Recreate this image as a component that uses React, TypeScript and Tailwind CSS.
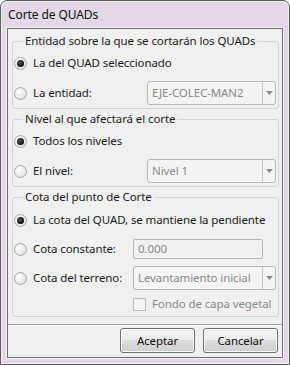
import React from "react";

function Radio({ checked }: { checked?: boolean }) {
  return (
    <span className="w-[13px] h-[13px] shrink-0 rounded-full border border-[#a9a9a9] bg-[radial-gradient(circle_at_35%_35%,#ffffff,#e4e4e4_70%,#d0d0d0)] flex items-center justify-center">
      {checked && (
        <span className="w-[7px] h-[7px] rounded-full bg-[radial-gradient(circle_at_40%_40%,#555555,#0a0a0a_70%)]" />
      )}
    </span>
  );
}

function Arrow() {
  return (
    <svg width="7" height="4" viewBox="0 0 7 4">
      <path d="M0 0 H7 L3.5 4 Z" fill="#8a8a8a" />
    </svg>
  );
}

function Combo({ value, width }: { value: string; width: string }) {
  return (
    <div
      className={`${width} h-[24px] flex border border-[#b4b8bb] rounded-[3px] bg-[#f4f4f4] text-[#8a8a8a]`}
    >
      <div className="flex-1 flex items-center pl-[4px] overflow-hidden">{value}</div>
      <div className="w-[13px] border-l border-[#c4c7c9] flex items-center justify-center">
        <Arrow />
      </div>
    </div>
  );
}

function Group({ title, children }: { title: string; children: React.ReactNode }) {
  return (
    <fieldset className="ml-[4px] mr-[3px] border border-[#d2d4d6] rounded-[3px] pb-[3px]">
      <legend className="ml-[10px] px-[2px] leading-[16px]">{title}</legend>
      <div className="pl-[1px] pr-[2px] pt-[2px] flex flex-col">{children}</div>
    </fieldset>
  );
}

function Option({
  label,
  checked,
  labelWidth,
  children,
}: {
  label: string;
  checked?: boolean;
  labelWidth?: string;
  children?: React.ReactNode;
}) {
  return (
    <div className="h-[24px] flex items-center">
      <div className={`flex items-center gap-[6px] ${labelWidth ?? ""}`}>
        <Radio checked={checked} />
        <span>{label}</span>
      </div>
      {children}
    </div>
  );
}

function Button({ label }: { label: string }) {
  return (
    <button className="w-[75px] h-[25px] rounded-[3px] border border-[#707070] bg-[linear-gradient(#f2f2f2,#ebebeb_50%,#dddddd_50%,#cfcfcf)] shadow-[inset_0_0_0_1px_#fcfcfc] text-[#111]">
      {label}
    </button>
  );
}

export default function App() {
  return (
    <div className="w-[290px] h-[365px] bg-white font-['Noto_Sans',sans-serif] text-[11.5px] tracking-[-0.1px] whitespace-nowrap text-[#1a1a1a]">
      <div className="h-full flex flex-col rounded-t-[7px] border border-[#5e5e5e] bg-[#e4d7e8] shadow-[inset_0_0_0_1px_#f3ecf4] px-[6px] pb-[6px]">
        {/* title bar */}
        <div className="h-[27px] flex items-center pl-[1px] pt-[1px] text-[12px] text-[#111]">
          Corte de QUADs
        </div>

        {/* client area */}
        <div className="flex-1 flex flex-col border border-[#6e6e6e] bg-[#f0f0f0] shadow-[0_0_0_1px_#f6f1f7]">
          <div className="mt-[4px]">
            <Group title="Entidad sobre la que se cortarán los QUADs">
              <Option label="La del QUAD seleccionado" checked />
              <div className="h-[6px]" />
              <Option label="La entidad:" labelWidth="w-[133px]">
                <Combo value="EJE-COLEC-MAN2" width="w-[129px]" />
              </Option>
            </Group>
          </div>

          <div className="mt-[2px]">
            <Group title="Nivel al que afectará el corte">
              <Option label="Todos los niveles" checked />
              <div className="h-[6px]" />
              <Option label="El nivel:" labelWidth="w-[133px]">
                <Combo value="Nivel 1" width="w-[129px]" />
              </Option>
            </Group>
          </div>

          <div className="mt-[2px]">
            <Group title="Cota del punto de Corte">
              <div className="flex flex-col gap-[5px] pt-[1px]">
                <Option label="La cota del QUAD, se mantiene la pendiente" checked />
                <Option label="Cota constante:" labelWidth="w-[119px]">
                  <div className="w-[130px] h-[20px] flex items-center pl-[4px] border border-[#b4b8bb] rounded-[2px] bg-[#f0f0f0] text-[#8a8a8a]">
                    0.000
                  </div>
                </Option>
                <Option label="Cota del terreno:" labelWidth="w-[119px]">
                  <Combo value="Levantamiento inicial" width="w-[143px]" />
                </Option>
              </div>
              <div className="h-[18px] mt-[5px] flex items-center gap-[6px] pl-[119px] text-[#8a8a8a]">
                <span className="w-[13px] h-[13px] border border-[#bcbcbc] bg-[#f4f4f4]" />
                <span>Fondo de capa vegetal</span>
              </div>
            </Group>
          </div>

          <div className="mt-auto pb-[4px]">
            <div className="h-[1px] bg-[#a0a0a0] border-b border-white box-content" />
            <div className="mt-[2px] flex justify-end gap-[8px] pr-[4px]">
              <Button label="Aceptar" />
              <Button label="Cancelar" />
            </div>
          </div>
        </div>
      </div>
    </div>
  );
}
